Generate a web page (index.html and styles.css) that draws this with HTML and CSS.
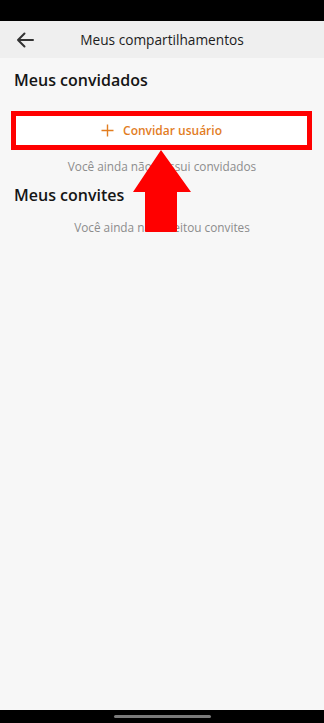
FILE: index.html
```html
<!DOCTYPE html>
<html lang="pt">
<head>
<meta charset="utf-8">
<link rel="stylesheet" href="styles.css">
</head>
<body>
<div class="screen">
  <div class="statusbar"></div>
  <header class="appbar">
    <button class="back" aria-label="Voltar">
      <svg width="18" height="16" viewBox="0 0 18 16"><path d="M17 8H2M8.5 1.5L2 8l6.5 6.5" fill="none" stroke="#333" stroke-width="2" stroke-linecap="round" stroke-linejoin="round"/></svg>
    </button>
    <h1 class="title">Meus compartilhamentos</h1>
  </header>
  <main class="content">
    <h2 class="section-title">Meus convidados</h2>
    <div class="invite-wrap">
      <button class="invite-btn"><svg class="plus" width="13" height="13" viewBox="0 0 13 13"><path d="M6.5 0.5v12M0.5 6.5h12" stroke="#e27d1f" stroke-width="1.4" fill="none"/></svg>Convidar usuário</button>
      <div class="highlight"></div>
    </div>
    <p class="empty first">Você ainda não possui convidados</p>
    <h2 class="section-title second">Meus convites</h2>
    <p class="empty last">Você ainda não aceitou convites</p>
    <svg class="arrow" width="60" height="84" viewBox="0 0 60 84"><path d="M28 0 L58 42 L44 42 L44 81 Q44 82 43 82 L13 82 Q12 82 12 81 L12 42 L0 42 Z" fill="#ff0000"/></svg>
  </main>
  <div class="navbar"><div class="handle"></div></div>
</div>
</body>
</html>
```
FILE: styles.css
```css
html, body {
  margin: 0;
  padding: 0;
}
body {
  font-family: "Open Sans", "Noto Sans", sans-serif;
  background: #000;
}
.screen {
  width: 324px;
  height: 723px;
  display: flex;
  flex-direction: column;
  background: #f7f7f7;
  position: relative;
  overflow: hidden;
}
.statusbar {
  height: 21px;
  background: #000;
  flex: none;
}
.appbar {
  height: 37px;
  flex: none;
  background: #efefef;
  display: flex;
  align-items: center;
  position: relative;
}
.back {
  background: none;
  border: 0;
  padding: 0;
  margin-left: 15px;
  width: 20px;
  height: 20px;
  display: flex;
  align-items: center;
  justify-content: center;
}
.title {
  position: absolute;
  left: 0;
  right: 0;
  text-align: center;
  margin: 0;
  font-size: 13.7px;
  font-weight: 400;
  color: #1c1c1c;
  pointer-events: none;
}
.content {
  flex: 1;
  position: relative;
  padding: 10px 0 0;
}
.section-title {
  margin: 0 0 0 14px;
  font-size: 16px;
  font-weight: 600;
  color: #151515;
  line-height: 24px;
}
.section-title.second {
  margin-top: 8px;
}
.invite-wrap {
  position: relative;
  margin: 24px 17px 0 16px;
}
.invite-btn {
  width: 100%;
  height: 29px;
  border: 0;
  background: #fff;
  color: #e27d1f;
  font-family: inherit;
  font-size: 12px;
  font-weight: 600;
  display: flex;
  align-items: center;
  justify-content: center;
  gap: 9px;
  padding: 0;
}
.plus {
  flex: none;
}
.highlight {
  position: absolute;
  left: -5px;
  right: -5px;
  top: -5px;
  bottom: -5px;
  border: 5px solid #ff0000;
}
.empty {
  margin: 12px 0 0;
  text-align: center;
  font-size: 11.8px;
  color: #8c8c8c;
  line-height: 18px;
}
.empty.last {
  margin-top: 11px;
}
.arrow {
  position: absolute;
  left: 133px;
  top: 92px;
}
.navbar {
  height: 13px;
  flex: none;
  background: #000;
  display: flex;
  justify-content: center;
  align-items: center;
}
.handle {
  width: 97px;
  height: 3px;
  border-radius: 2px;
  background: #7a7a7a;
}
```
